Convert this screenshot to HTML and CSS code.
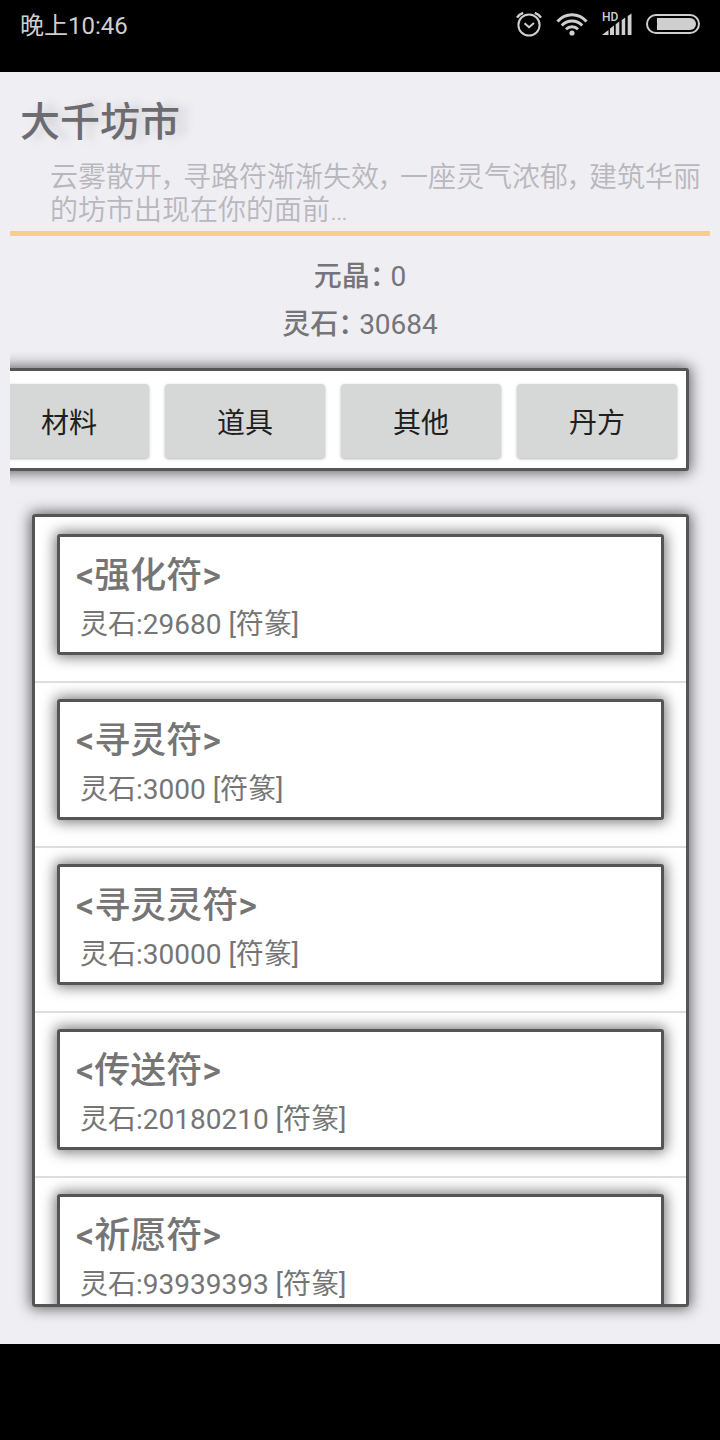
FILE: index.html
```html
<!DOCTYPE html>
<html lang="zh-CN">
<head>
    <title>大千坊市</title>
    <meta charset="utf-8">
    <meta name="viewport" content="width=device-width, initial-scale=1">
    <link rel="stylesheet" href="styles.css">
</head>

<body>
    <div class="status_bar">
        <span class="time">晚上10:46</span>
        <div class="status_icons">
            <svg class="icon_alarm" width="26" height="26" viewBox="0 0 26 26" fill="none" stroke="#cfcfcf" stroke-width="2">
                <circle cx="13" cy="14" r="10.6"/>
                <path d="M8.5 12.2l4.5 4 5-4.3"/>
                <path d="M1 6.6Q3 3.3 7.2 1.8M25 6.6Q23 3.3 18.8 1.8" stroke-width="2.4"/>
            </svg>
            <svg class="icon_wifi" width="32" height="24" viewBox="0 0 32 24" fill="none" stroke="#cfcfcf" stroke-width="3">
                <path d="M1.5 9.5Q7.5 2.7 16 2.7T30.5 9.5"/>
                <path d="M5.8 13.5Q10 8.9 16 8.9T26.2 13.5"/>
                <path d="M10 17.3Q12.5 14.8 16 14.8T22 17.3"/>
                <circle cx="16" cy="21" r="2.6" fill="#cfcfcf" stroke="none"/>
            </svg>
            <svg class="icon_signal" width="30" height="26" viewBox="0 0 30 26" fill="#cfcfcf">
                <text x="0" y="10" class="hd">HD</text>
                <path d="M0 24l6.5-5v5zM8 24v-6.5l4-3V24zM13.7 24V13.2l3.6-2.6V24zM19.7 24V9l3.5-2.5V24zM25.7 24V5l3.8-2.5V24z"/>
            </svg>
            <svg class="icon_battery" width="54" height="20" viewBox="0 0 54 20">
                <rect x="1" y="1" width="52" height="18" rx="9" fill="none" stroke="#cfcfcf" stroke-width="2"/>
                <path d="M11 4h33a6 6 0 0 1 0 12H11z" fill="#cfcfcf"/>
            </svg>
        </div>
    </div>

    <div class="app">
        <header class="header">
            <h1 class="title">大千坊市</h1>
            <p class="intro">云雾散开<span class="comma">，</span>寻路符渐渐失效<span class="comma">，</span>一座灵气浓郁<span class="comma">，</span>建筑华丽的坊市出现在你的面前…</p>
        </header>

        <div class="money">
            <div><b>元晶：</b> 0</div>
            <div><b>灵石：</b> 30684</div>
        </div>

        <!-- category tabs, aligned to the last one -->
        <div class="tabs_scroll">
            <div class="tabs">
                <button type="button">材料</button>
                <button type="button">道具</button>
                <button type="button">其他</button>
                <button type="button">丹方</button>
            </div>
        </div>

        <ul class="goods">
            <li>
                <div class="card">
                    <h2>&lt;强化符&gt;</h2>
                    <p>灵石:29680 [符篆]</p>
                </div>
            </li>
            <li>
                <div class="card">
                    <h2>&lt;寻灵符&gt;</h2>
                    <p>灵石:3000 [符篆]</p>
                </div>
            </li>
            <li>
                <div class="card">
                    <h2>&lt;寻灵灵符&gt;</h2>
                    <p>灵石:30000 [符篆]</p>
                </div>
            </li>
            <li>
                <div class="card">
                    <h2>&lt;传送符&gt;</h2>
                    <p>灵石:20180210 [符篆]</p>
                </div>
            </li>
            <li>
                <div class="card">
                    <h2>&lt;祈愿符&gt;</h2>
                    <p>灵石:93939393 [符篆]</p>
                </div>
            </li>
        </ul>
    </div>

    <div class="nav_bar"></div>
</body>
</html>
```

FILE: styles.css
```css
* {box-sizing: border-box;}
body {
    margin: 0;
    height: 100vh;
    display: flex;
    flex-direction: column;
    background-color: black;
    font-family: Roboto, "Noto Sans CJK SC", sans-serif;
    font-size: 28px;
    color: #757575;
}
h1, h2, p, ul {margin: 0; padding: 0;}

.status_bar {
    height: 72px;
    padding: 0 20px;
    display: flex;
    justify-content: space-between;
    align-items: flex-start;
    color: #cfcfcf;
    font-size: 24px;
    line-height: 52px;
}
.status_icons {
    display: flex;
    align-items: center;
    gap: 14px;
    height: 48px;
}
.hd {
    font-size: 12px;
    font-weight: 500;
}
.nav_bar {height: 96px;}

.app {
    flex: 1;
    min-height: 0;
    display: flex;
    flex-direction: column;
    background-color: #efeef3;
}
.header {
    margin: 0 10px;
    padding: 27px 0 4px 10px;
    border-bottom: 5px solid #f5d086;
}
.title {
    font-size: 40px;
    font-weight: 500;
    line-height: 48px;
    color: #6c6b70;
    text-shadow: 10px 0 10px #d0d0d4;
}
.intro {
    padding: 14px 0 0 30px;
    line-height: 33px;
    font-weight: 350;
    color: #b8b7bd;
}
/* full-width comma set tighter than one em */
.comma {
    margin-right: 7px;
    font-feature-settings: "palt";
}

.money {
    padding: 17px 0 3px;
    line-height: 48px;
    text-align: center;
    color: #757479;
}
.money b {
    font-weight: 500;
    font-feature-settings: "palt";
}

.tabs_scroll {
    margin: 0 10px;
    padding: 16px 21px 16px 0;
    display: flex;
    justify-content: flex-end;
    overflow: hidden;
}
.tabs {
    flex: none;
    display: flex;
    gap: 16px;
    padding: 13px 9px 10px;
    border: 3px solid #555;
    border-radius: 3px;
    background-color: white;
    box-shadow: 0 0 14px 2px #666;
}
.tabs button {
    width: 160px;
    height: 74px;
    border: 0;
    border-radius: 4px;
    background-color: #d6d8d7;
    box-shadow: 0 1px 3px rgba(0, 0, 0, 0.3);
    font: inherit;
    font-weight: 400;
    color: #202020;
}

.goods {
    flex: 1;
    min-height: 0;
    margin: 27px 31px 37px 32px;
    padding-top: 1px;
    overflow: auto;
    scrollbar-width: none;
    list-style: none;
    border: 3px solid #555;
    border-radius: 3px;
    background-color: white;
    box-shadow: 0 0 14px 2px #666;
}
.goods li {
    padding: 16px 22px 26px;
    border-bottom: 2px solid #dedede;
}
.card {
    padding: 15px 16px 7px;
    border: 3px solid #555;
    border-radius: 3px;
    background-color: white;
    box-shadow: 0 0 14px 2px #777;
}
.card h2 {
    margin-bottom: 4px;
    font-size: 36px;
    font-weight: 500;
    line-height: 49px;
}
.card p {
    padding-left: 4px;
    font-weight: 400;
    line-height: 40px;
}
```
